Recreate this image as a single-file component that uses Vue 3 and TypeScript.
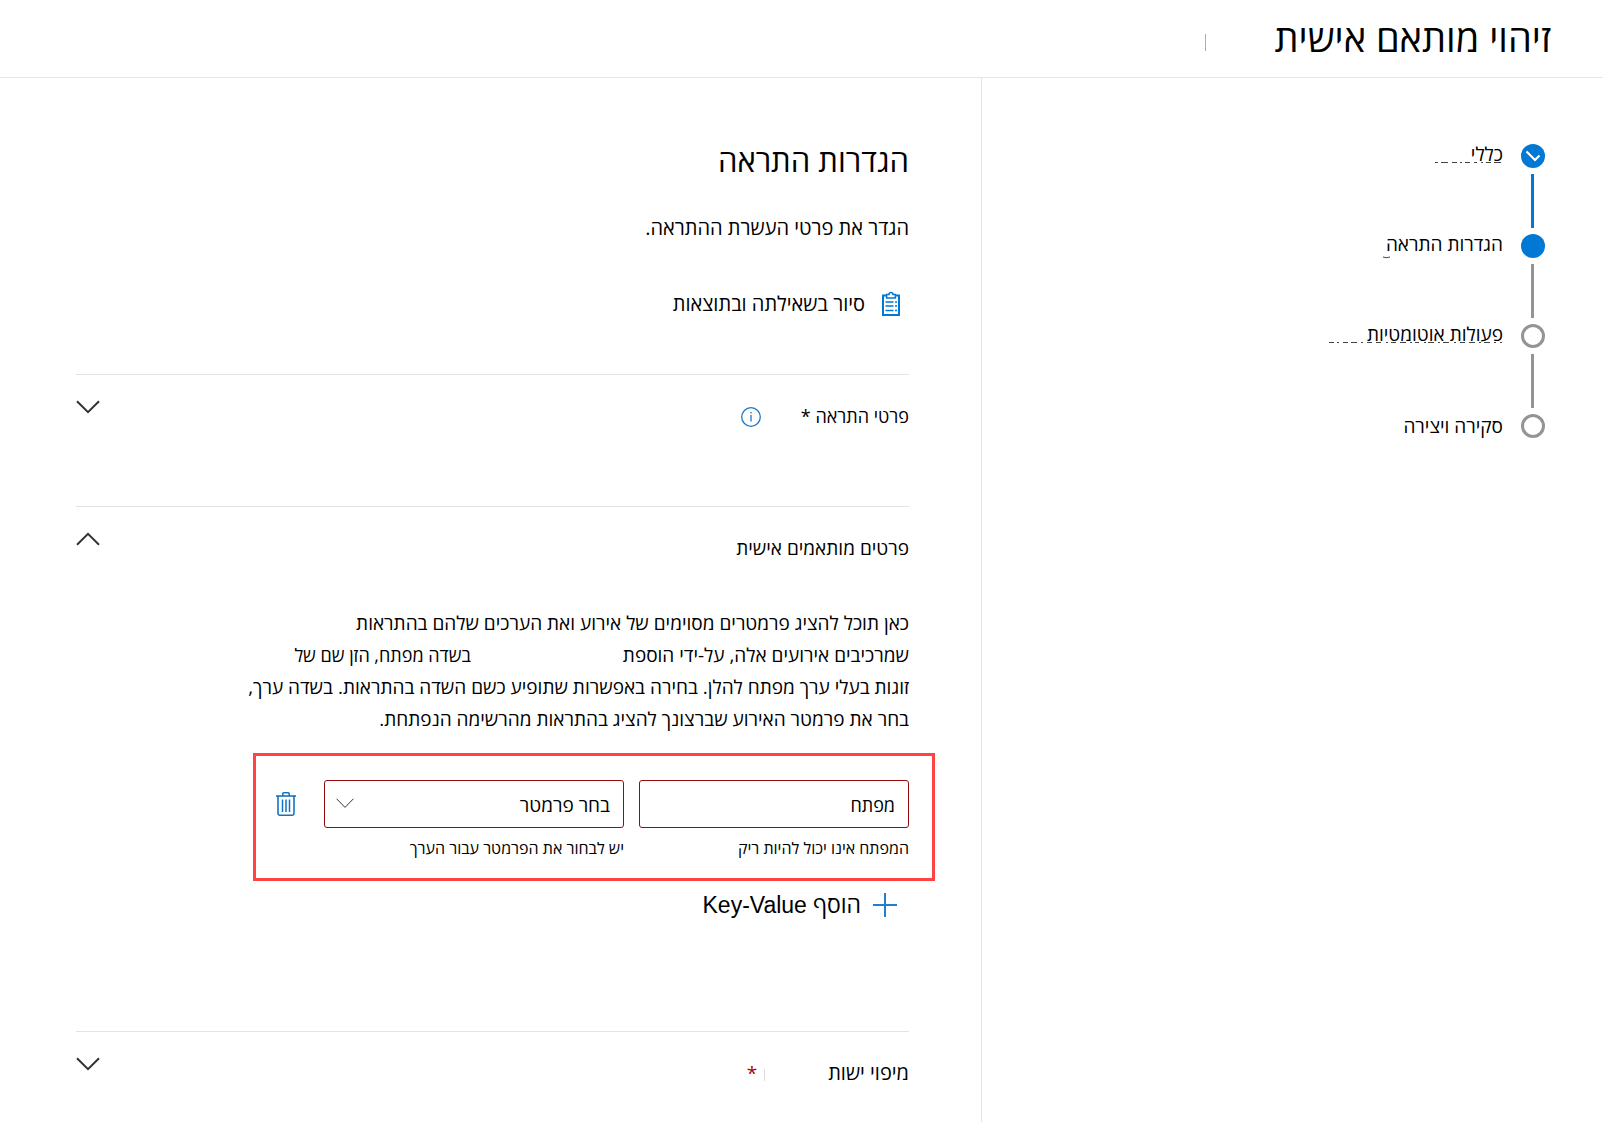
<script setup lang="ts">
import { ref } from 'vue'

type StepState = 'done' | 'current' | 'todo'
interface Step {
  label: string
  state: StepState
  /** Broken stroke under the label: view box size and path */
  mark?: { width: number; height: number; d: string }
}

const steps: Step[] = [
  {
    label: 'כללי',
    state: 'done',
    mark: { width: 70, height: 24, d: 'M2 20.5h3M8 20.5h7M19 20.5h5M27 20.5h2M32 20.5h5M41 20.5h3M48 20.5h2M53 20.5h5M61 20.5h7' },
  },
  { label: 'הגדרות התראה', state: 'current', mark: { width: 122, height: 30, d: 'M2 25q3 1.500 7 0' } },
  {
    label: 'פעולות אוטומטיות',
    state: 'todo',
    mark: {
      width: 174,
      height: 24,
      d: 'M0 20.5h5M8 20.5h2M14 20.5h5M22 20.5h6M32 20.5h2M38 20.5h5M47 20.5h5M57 20.5h2M62 20.5h5M71 20.5h6M81 20.5h2M86 20.5h4M95 20.5h2M99 20.5h6M109 20.5h2M114 20.5h6M125 20.5h2M131 20.5h5M140 20.5h6M150 20.5h2M155 20.5h6M165 20.5h2M171 20.5h2',
    },
  },
  { label: 'סקירה ויצירה', state: 'todo' },
]

const keyName = ref('')
const parameter = ref('')
</script>

<template>
  <div class="page" dir="rtl" lang="he">
    <header class="top">
      <h1>זיהוי מותאם אישית</h1>
      <span class="top-tick"></span>
    </header>

    <div class="body">
      <nav class="steps">
        <ol>
          <li v-for="step in steps" :key="step.label" :class="step.state">
            <span class="dot">
              <svg v-if="step.state === 'done'" width="24" height="24" viewBox="0 0 24 24">
                <path d="M5.500 7.500 14 16 18.500 11.500" fill="none" stroke="#fff" stroke-width="2.2" />
              </svg>
            </span>
            <a href="#" class="step-label">
              {{ step.label }}
              <svg
                v-if="step.mark"
                class="mark"
                :width="step.mark.width"
                :height="step.mark.height"
                :viewBox="`0 0 ${step.mark.width} ${step.mark.height}`"
              >
                <path :d="step.mark.d" fill="none" stroke="#444" stroke-width="1" />
              </svg>
            </a>
          </li>
        </ol>
      </nav>

      <main class="content">
        <h2>הגדרות התראה</h2>
        <p class="lead">הגדר את פרטי העשרת ההתראה.</p>
        <a href="#" class="tour">
          <svg width="20" height="26" viewBox="0 0 20 26" fill="none" stroke="#0078d4">
            <path d="M5 4.500H2v19.500h16V4.500h-3" stroke-width="2" />
            <path d="M5.600 3.500h2.400a2 2 0 0 1 4 0h2.400v3.500H5.600z" stroke-width="1.500" />
            <path d="M4.500 11h8M4.500 15h8M4.500 19.500h8M14 11h2M14 15h2M14 19.500h2" stroke-width="1.600" />
          </svg>
          <span>סיור בשאילתה ובתוצאות</span>
        </a>

        <section class="group details">
          <h3 class="small">פרטי התראה *</h3>
          <svg class="info" width="20" height="20" viewBox="0 0 20 20" fill="none" stroke="#1a78c8">
            <circle cx="10" cy="10" r="9.3" stroke-width="1.3" />
            <path d="M10 8v6.6M10 5v1.6" stroke-width="1.3" />
          </svg>
          <button type="button" class="toggle" aria-label="הרחב">
            <svg width="24" height="14" viewBox="0 0 24 14"><path d="M1 1.2 12 12.2 23 1.2" /></svg>
          </button>
        </section>

        <section class="group custom">
          <h3>פרטים מותאמים אישית</h3>
          <button type="button" class="toggle" aria-label="כווץ">
            <svg width="24" height="14" viewBox="0 0 24 14"><path d="M1 12.8 12 1.8 23 12.8" /></svg>
          </button>
        </section>

        <p class="text">
          <span class="line">כאן תוכל להציג פרמטרים מסוימים של אירוע ואת הערכים שלהם בהתראות</span>
          <span class="line split">
            <span>שמרכיבים אירועים אלה, על-ידי הוספת</span>
            <span class="small">בשדה מפתח, הזן שם של</span>
          </span>
          <span class="line">זוגות בעלי ערך מפתח להלן. בחירה באפשרות שתופיע כשם השדה בהתראות. בשדה ערך,</span>
          <span class="line">בחר את פרמטר האירוע שברצונך להציג בהתראות מהרשימה הנפתחת.</span>
        </p>

        <div class="pair">
          <div class="field key">
            <input id="key" v-model="keyName" type="text" placeholder="מפתח" aria-label="מפתח" />
            <label for="key">המפתח אינו יכול להיות ריק</label>
          </div>
          <div class="field value">
            <div class="select-wrap">
              <select id="param" v-model="parameter">
                <option value="">בחר פרמטר</option>
              </select>
              <svg class="caret" width="18" height="11" viewBox="0 0 18 11"><path d="M.6 .8 9 9.4 17.4 .8" /></svg>
            </div>
            <label for="param">יש לבחור את הפרמטר עבור הערך</label>
          </div>
          <button type="button" class="remove" aria-label="מחק">
            <svg width="20" height="24" viewBox="0 0 20 24" fill="none" stroke="#1173c5">
              <path d="M0 4h20" stroke-width="1.6" />
              <path d="M6.8 4V1.6q0-.8.8-.8h4.8q.8 0 .8.8V4" stroke-width="1.5" />
              <path d="M2 4v17.6q0 1.6 1.6 1.6h12.8q1.6 0 1.6-1.6V4" stroke-width="1.6" />
              <path d="M6.5 7.5V20M10 7.5V20M13.5 7.5V20" stroke-width="1.5" />
            </svg>
          </button>
        </div>

        <button type="button" class="add">
          <svg width="24" height="24" viewBox="0 0 24 24"><path d="M12 0v24M0 12h24" stroke="#2080cd" stroke-width="2" /></svg>
          <span>הוסף <span class="latin">Key-Value</span></span>
        </button>

        <section class="group entity">
          <h3 class="large">מיפוי ישות</h3>
          <span class="tick"></span>
          <span class="required">*</span>
          <button type="button" class="toggle" aria-label="הרחב">
            <svg width="24" height="14" viewBox="0 0 24 14"><path d="M1 1.2 12 12.2 23 1.2" /></svg>
          </button>
        </section>
      </main>
    </div>
  </div>
</template>

<style>
body {
  margin: 0;
  background: #fff;
}
</style>

<style scoped>
.page {
  display: flex;
  flex-direction: column;
  min-height: 100vh;
  overflow: hidden;
  color: #000;
  font-family: "Open Sans", "Liberation Sans", sans-serif;
  font-size: 19px;
  line-height: 32px;
}
* {
  box-sizing: border-box;
}
h1, h2, h3, p, ol {
  margin: 0;
  padding: 0;
  font-weight: 400;
}
svg {
  display: block;
  flex: none;
}
a {
  color: inherit;
  text-decoration: none;
}
button {
  padding: 0;
  border: 0;
  background: none;
  color: inherit;
  font: inherit;
}
.top {
  display: flex;
  align-items: center;
  gap: 68px;
  height: 78px;
  padding-bottom: 4px;
  padding-inline-start: 52px;
  border-bottom: 1px solid #e6e6e6;
}
h1 {
  font-size: 38px;
  line-height: 48px;
}
.top-tick {
  width: 1px;
  height: 17px;
  margin-top: 12px;
  background: #7cb8f0;
}
.body {
  display: flex;
  flex: 1;
}
.steps {
  flex: 0 0 622px;
  padding: 66px 58px 0 0;
  border-left: 1px solid #e3e3e3;
}
ol {
  list-style: none;
}
li {
  display: flex;
  position: relative;
  gap: 18px;
  height: 90px;
}
.dot {
  flex: none;
  width: 24px;
  height: 24px;
  border: 3px solid #949494;
  border-radius: 50%;
}
.done .dot,
.current .dot {
  border: 0;
  background: #0078d4;
}
li:not(:last-child)::before {
  content: "";
  position: absolute;
  top: 30px;
  right: 11px;
  width: 3px;
  height: 54px;
  background: #949494;
}
li.done::before {
  background: #0078d4;
}
.step-label {
  position: relative;
  height: 24px;
  margin-top: -2px;
  line-height: 24px;
}
li:last-child .step-label {
  margin-top: 0;
}
.mark {
  position: absolute;
  top: 0;
  right: 0;
}
.content {
  flex: 1;
  padding: 60px 72px 0 76px;
}
h2 {
  font-size: 31px;
  line-height: 44px;
}
.lead {
  margin-top: 30px;
  font-size: 20px;
}
.tour {
  display: flex;
  align-items: center;
  gap: 16px;
  width: max-content;
  margin-top: 44px;
  padding-inline-start: 8px;
  font-size: 20px;
}
.group {
  display: flex;
  align-items: flex-start;
  border-top: 1px solid #e3e3e3;
}
h3 {
  font-size: 19px;
  line-height: 32px;
}
.small {
  font-size: 18px;
}
.large {
  font-size: 20px;
}
.details {
  height: 132px;
  margin-top: 54px;
  padding-top: 25px;
}
.info {
  margin: 7px 40px 0 0;
}
.toggle {
  margin-inline-start: auto;
}
.toggle path,
.caret path {
  fill: none;
  stroke: #333;
  stroke-width: 2;
}
.caret path {
  stroke-width: 1;
}
.custom {
  padding-top: 25px;
}
.text {
  margin-top: 43px;
}
.line {
  display: block;
  white-space: nowrap;
}
.split {
  display: flex;
  gap: 152px;
}
.pair {
  display: flex;
  gap: 15px;
  width: 682px;
  height: 128px;
  margin: 18px -26px 0 0;
  padding: 24px 23px 0 20px;
  border: 3px solid #ff4343;
}
.field {
  display: flex;
  flex-direction: column;
}
.key {
  width: 270px;
}
.value {
  width: 300px;
}
.select-wrap {
  position: relative;
}
input,
select {
  display: block;
  width: 100%;
  height: 48px;
  padding: 2px 13px 0;
  border: 1px solid #990a0a;
  border-radius: 3px;
  background: #fff;
  color: #000;
  font: inherit;
  appearance: none;
}
input::placeholder {
  color: #000;
  font-size: 18px;
  opacity: 1;
}
.caret {
  position: absolute;
  top: 18px;
  left: 12px;
}
label {
  height: 40px;
  font-size: 16px;
  line-height: 40px;
}
.remove {
  align-self: flex-start;
  margin-top: 12px;
  margin-inline-start: auto;
}
.add {
  display: flex;
  align-items: center;
  gap: 12px;
  margin-top: 7px;
  padding-inline-start: 12px;
  font-size: 23px;
}
.latin {
  font-family: "Liberation Sans", sans-serif;
}
.entity {
  margin-top: 110px;
  padding-top: 25px;
}
.tick {
  width: 1px;
  height: 12px;
  margin: 12px 63px 0 0;
  background: #ddd;
}
.required {
  margin-inline-start: 7px;
  color: #a80000;
}
</style>
